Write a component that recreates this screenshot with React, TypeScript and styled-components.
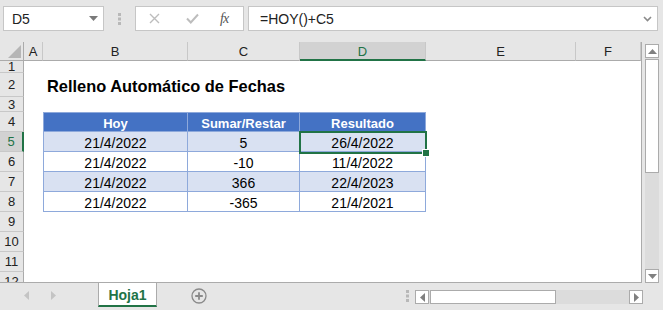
import styled, { createGlobalStyle } from "styled-components";

// --- colores tipo Excel ---
const GREEN = "#217346";
const BLUE = "#4472c4";
const BAND = "#d9e1f2";
const LINE = "#8ea9db";

const GlobalStyle = createGlobalStyle`
  html, body {
    margin: 0;
    padding: 0;
    background: #e6e6e6;
  }
  body {
    font-family: "Liberation Sans", Arial, sans-serif;
  }
`;

const Window = styled.div`
  width: 663px;
  height: 310px;
  display: flex;
  flex-direction: column;
  overflow: hidden;
  background: #e6e6e6;
`;

// --- barra de fórmulas ---
const FormulaBar = styled.div`
  height: 42px;
  box-sizing: border-box;
  display: flex;
  align-items: flex-start;
  padding: 6px 5px 0 3px;
`;

const NameBox = styled.div`
  width: 101px;
  height: 25px;
  box-sizing: border-box;
  background: #fff;
  border: 1px solid #c6c6c6;
  display: flex;
  align-items: center;
  justify-content: space-between;
  padding: 0 5px 0 8px;
  font-size: 14px;
  color: #222;
`;

const Grip = styled.div`
  width: 31px;
  height: 25px;
  display: flex;
  align-items: center;
  justify-content: center;
`;

const FxButtons = styled.div`
  width: 109px;
  height: 25px;
  box-sizing: border-box;
  background: #fff;
  border: 1px solid #c6c6c6;
  display: flex;
  align-items: center;
  padding: 0 0 0 13px;
`;

const FxSlot = styled.div<{ $w: number }>`
  width: ${(p) => p.$w}px;
  display: flex;
  align-items: center;
  justify-content: flex-start;
`;

const FxLabel = styled.span`
  font-family: "Liberation Serif", "Times New Roman", serif;
  font-style: italic;
  font-size: 14px;
  color: #555;
  letter-spacing: -1px;
`;

const FormulaInput = styled.div`
  flex: 1;
  margin-left: 4px;
  height: 25px;
  box-sizing: border-box;
  background: #fff;
  border: 1px solid #c6c6c6;
  display: flex;
  align-items: center;
  justify-content: space-between;
  padding: 0 5px 0 11px;
  font-size: 14px;
  color: #222;
`;

// --- hoja ---
const SheetArea = styled.div`
  height: 241px;
  display: flex;
`;

const Grid = styled.div`
  width: 642px;
  height: 241px;
  box-sizing: border-box;
  border-right: 1px solid #ababab;
  border-bottom: 1px solid #ababab;
  background: #fff;
  overflow: hidden;
  display: flex;
  flex-direction: column;
`;

const COLS = "24px 19px 145px 112px 126px 150px 1fr";

const Row = styled.div<{ $h: number }>`
  display: grid;
  grid-template-columns: ${COLS};
  height: ${(p) => p.$h}px;
  flex: none;
`;

const HeaderRow = styled(Row)`
  background: #e6e6e6;
`;

const Corner = styled.div`
  box-sizing: border-box;
  border-right: 1px solid #ababab;
  border-bottom: 1px solid #ababab;
  display: flex;
  align-items: flex-end;
  justify-content: flex-end;
  padding: 0 2px 2px 0;
`;

const ColHead = styled.div<{ $active?: boolean }>`
  box-sizing: border-box;
  border-right: 1px solid #c8c8c8;
  border-bottom: ${(p) => (p.$active ? `2px solid ${GREEN}` : "1px solid #ababab")};
  background: ${(p) => (p.$active ? "#d2d2d2" : "#e6e6e6")};
  color: ${(p) => (p.$active ? GREEN : "#222")};
  font-size: 13px;
  display: flex;
  align-items: center;
  justify-content: center;
  padding-top: 1px;
`;

const RowHead = styled.div<{ $active?: boolean }>`
  box-sizing: border-box;
  border-bottom: 1px solid #c8c8c8;
  border-right: ${(p) => (p.$active ? `2px solid ${GREEN}` : "1px solid #ababab")};
  background: ${(p) => (p.$active ? "#d2d2d2" : "#e6e6e6")};
  color: ${(p) => (p.$active ? GREEN : "#222")};
  font-size: 13px;
  line-height: 13px;
  display: flex;
  align-items: center;
  justify-content: center;
  overflow: hidden;
`;

const Cell = styled.div`
  box-sizing: border-box;
`;

const Title = styled.div`
  grid-column: 3 / 6;
  font-size: 16.4px;
  font-weight: bold;
  color: #000;
  display: flex;
  align-items: center;
  padding: 2px 0 0 4px;
  white-space: nowrap;
`;

type Kind = "head" | "band" | "plain";

const TableCell = styled.div<{ $kind: Kind; $first?: boolean }>`
  position: relative;
  box-sizing: border-box;
  border-right: 1px solid ${LINE};
  border-bottom: 1px solid ${LINE};
  border-left: ${(p) => (p.$first ? `1px solid ${LINE}` : "none")};
  border-top: ${(p) => (p.$kind === "head" ? `1px solid ${LINE}` : "none")};
  background: ${(p) => (p.$kind === "head" ? BLUE : p.$kind === "band" ? BAND : "#fff")};
  color: ${(p) => (p.$kind === "head" ? "#fff" : "#000")};
  font-weight: ${(p) => (p.$kind === "head" ? "bold" : "normal")};
  font-size: ${(p) => (p.$kind === "head" ? "13px" : "14px")};
  display: flex;
  align-items: center;
  justify-content: center;
  padding-top: 2px;
`;

const Selection = styled.div`
  position: absolute;
  z-index: 5;
  top: -1px;
  left: -1px;
  right: -2px;
  bottom: -3px;
  border: 2px solid ${GREEN};
  pointer-events: none;
`;

const FillHandle = styled.div`
  position: absolute;
  right: -5px;
  bottom: -5px;
  width: 6px;
  height: 6px;
  background: ${GREEN};
  border: 1px solid #fff;
`;

// --- barras de desplazamiento ---
const VScroll = styled.div`
  width: 14px;
  margin: 2px 0 0 3px;
  height: 239px;
  display: flex;
  flex-direction: column;
  background: #dcdcdc;
`;

const ScrollBtn = styled.div`
  width: 14px;
  height: 14px;
  box-sizing: border-box;
  background: #fff;
  border: 1px solid #ababab;
  display: flex;
  align-items: center;
  justify-content: center;
  flex: none;
`;

const Thumb = styled.div<{ $size: number; $horizontal?: boolean }>`
  box-sizing: border-box;
  background: #fff;
  border: 1px solid #ababab;
  flex: none;
  ${(p) => (p.$horizontal ? `width: ${p.$size}px; height: 14px;` : `height: ${p.$size}px; width: 14px;`)}
  margin: ${(p) => (p.$horizontal ? "0 0 0 1px" : "1px 0 0 0")};
`;

const Spacer = styled.div`
  flex: 1;
`;

// --- pestañas ---
const TabBar = styled.div`
  height: 27px;
  display: flex;
  align-items: flex-start;
`;

const NavArrows = styled.div`
  width: 98px;
  height: 25px;
  display: flex;
  align-items: center;
  padding-left: 24px;
  gap: 22px;
  box-sizing: border-box;
`;

const SheetTab = styled.div`
  width: 59px;
  height: 24px;
  box-sizing: border-box;
  background: #fff;
  border-left: 1px solid #ababab;
  border-right: 1px solid #ababab;
  border-bottom: 2px solid ${GREEN};
  color: ${GREEN};
  font-weight: bold;
  font-size: 14px;
  display: flex;
  align-items: center;
  justify-content: center;
  padding-top: 1px;
`;

const AddSheet = styled.div`
  width: 84px;
  height: 26px;
  display: flex;
  align-items: center;
  justify-content: center;
`;

const HGrip = styled.div`
  width: 16px;
  margin-left: 158px;
  height: 26px;
  display: flex;
  align-items: center;
  justify-content: center;
`;

const HScroll = styled.div`
  width: 228px;
  height: 14px;
  margin-top: 7px;
  display: flex;
  background: #dcdcdc;
`;

const Dots = () => (
  <svg width="3" height="12" viewBox="0 0 3 12">
    {[0, 4.5, 9].map((y) => (
      <rect key={y} x="0" y={y} width="3" height="3" fill="#b8b8b8" />
    ))}
  </svg>
);

const Triangle = ({ dir, color = "#808080" }: { dir: "up" | "down" | "left" | "right"; color?: string }) => {
  const pts = {
    up: "0,5 4.5,0 9,5",
    down: "0,0 9,0 4.5,5",
    left: "5,0 5,9 0,4.5",
    right: "0,0 0,9 5,4.5",
  }[dir];
  const vert = dir === "up" || dir === "down";
  return (
    <svg width={vert ? 9 : 5} height={vert ? 5 : 9} viewBox={vert ? "0 0 9 5" : "0 0 5 9"}>
      <polygon points={pts} fill={color} />
    </svg>
  );
};

const columns = ["A", "B", "C", "D", "E", "F"];

const data = [
  ["21/4/2022", "5", "26/4/2022"],
  ["21/4/2022", "-10", "11/4/2022"],
  ["21/4/2022", "366", "22/4/2023"],
  ["21/4/2022", "-365", "21/4/2021"],
];

function App() {
  return (
    <>
      <GlobalStyle />
      <Window>
        <FormulaBar>
          <NameBox>
            D5
            <Triangle dir="down" color="#7a7a7a" />
          </NameBox>
          <Grip>
            <Dots />
          </Grip>
          <FxButtons>
            <FxSlot $w={37}>
              <svg width="11" height="11" viewBox="0 0 11 11">
                <path d="M1 1 L10 10 M10 1 L1 10" stroke="#bdbdbd" strokeWidth="1.4" />
              </svg>
            </FxSlot>
            <FxSlot $w={34}>
              <svg width="13" height="11" viewBox="0 0 13 11">
                <path d="M1 5.5 L4.8 9.5 L12 1.5" stroke="#bdbdbd" strokeWidth="2" fill="none" />
              </svg>
            </FxSlot>
            <FxSlot $w={20}>
              <FxLabel>fx</FxLabel>
            </FxSlot>
          </FxButtons>
          <FormulaInput>
            =HOY()+C5
            <svg width="9" height="6" viewBox="0 0 9 6">
              <path d="M1 1 L4.5 4.5 L8 1" stroke="#8a8a8a" strokeWidth="1.6" fill="none" />
            </svg>
          </FormulaInput>
        </FormulaBar>

        <SheetArea>
          <Grid>
            <HeaderRow $h={19}>
              <Corner>
                <svg width="13" height="13" viewBox="0 0 13 13">
                  <polygon points="13,0 13,13 0,13" fill="#b6b6b6" />
                </svg>
              </Corner>
              {columns.map((c) => (
                <ColHead key={c} $active={c === "D"}>
                  {c}
                </ColHead>
              ))}
            </HeaderRow>

            <Row $h={12}>
              <RowHead>1</RowHead>
            </Row>
            <Row $h={24}>
              <RowHead>2</RowHead>
              <Cell />
              <Title>Relleno Automático de Fechas</Title>
            </Row>
            <Row $h={15}>
              <RowHead>3</RowHead>
            </Row>
            <Row $h={20}>
              <RowHead>4</RowHead>
              <Cell />
              <TableCell $kind="head" $first>Hoy</TableCell>
              <TableCell $kind="head">Sumar/Restar</TableCell>
              <TableCell $kind="head">Resultado</TableCell>
            </Row>
            {data.map((r, i) => {
              const kind: Kind = i % 2 === 0 ? "band" : "plain";
              const active = i === 0;
              return (
                <Row $h={20} key={i}>
                  <RowHead $active={active}>{i + 5}</RowHead>
                  <Cell />
                  <TableCell $kind={kind} $first>{r[0]}</TableCell>
                  <TableCell $kind={kind}>{r[1]}</TableCell>
                  <TableCell $kind={kind}>
                    {r[2]}
                    {active && (
                      <Selection>
                        <FillHandle />
                      </Selection>
                    )}
                  </TableCell>
                </Row>
              );
            })}
            {[9, 10, 11, 12].map((n) => (
              <Row $h={20} key={n}>
                <RowHead>{n}</RowHead>
              </Row>
            ))}
          </Grid>

          <VScroll>
            <ScrollBtn>
              <Triangle dir="up" />
            </ScrollBtn>
            <Thumb $size={114} />
            <Spacer />
            <ScrollBtn>
              <Triangle dir="down" />
            </ScrollBtn>
          </VScroll>
        </SheetArea>

        <TabBar>
          <NavArrows>
            <Triangle dir="left" color="#c4c4c4" />
            <Triangle dir="right" color="#c4c4c4" />
          </NavArrows>
          <SheetTab>Hoja1</SheetTab>
          <AddSheet>
            <svg width="16" height="16" viewBox="0 0 16 16">
              <circle cx="8" cy="8" r="7" stroke="#8a8a8a" strokeWidth="1.3" fill="none" />
              <path d="M8 4.2 V11.8 M4.2 8 H11.8" stroke="#8a8a8a" strokeWidth="1.8" />
            </svg>
          </AddSheet>
          <HGrip>
            <Dots />
          </HGrip>
          <HScroll>
            <ScrollBtn>
              <Triangle dir="left" />
            </ScrollBtn>
            <Thumb $size={126} $horizontal />
            <Spacer />
            <ScrollBtn>
              <Triangle dir="right" />
            </ScrollBtn>
          </HScroll>
        </TabBar>
      </Window>
    </>
  );
}

export default App;
